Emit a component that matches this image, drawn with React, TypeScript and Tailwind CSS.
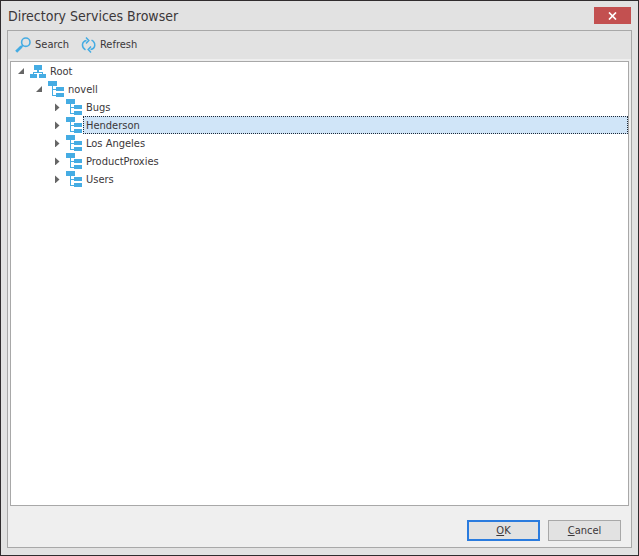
import { useState } from 'react';

interface TreeNode {
  id: string;
  label: string;
  level: number;
  expanded: boolean;
}

const nodes: TreeNode[] = [
  { id: 'root', label: 'Root', level: 0, expanded: true },
  { id: 'novell', label: 'novell', level: 1, expanded: true },
  { id: 'bugs', label: 'Bugs', level: 2, expanded: false },
  { id: 'henderson', label: 'Henderson', level: 2, expanded: false },
  { id: 'los-angeles', label: 'Los Angeles', level: 2, expanded: false },
  { id: 'product-proxies', label: 'ProductProxies', level: 2, expanded: false },
  { id: 'users', label: 'Users', level: 2, expanded: false },
];

const indents = ['pl-1', 'pl-[22px]', 'pl-10'];

function SearchIcon() {
  return (
    <svg className="w-4 h-4" viewBox="0 0 16 16" fill="none" stroke="#45ace3">
      <circle cx="10.8" cy="5.2" r="4.2" strokeWidth="1.6" />
      <path d="M8 8.200L6 10.200" strokeWidth="1.800" />
      <path d="M6.500 9.500L1.200 14.800" strokeWidth="2.800" />
    </svg>
  );
}

function RefreshIcon() {
  return (
    <svg className="w-4 h-4" viewBox="0 0 16 16" fill="none" stroke="#45ace3" strokeWidth="1.5">
      <path d="M4.500 12.800C.300 10.500 .300 4.500 5.500 3.500M10.500 3.200C15 5.500 15 11.500 9.500 12.500" />
      <path d="M5 .600L7.800 3.500L5 6.400M10 9.600L7.200 12.500L10 15.400" />
    </svg>
  );
}

function RootIcon() {
  return (
    <svg className="w-4 h-4" viewBox="0 0 16 16" fill="#45ace3" shapeRendering="crispEdges">
      <path d="M4 2h8v5H4zM7 7h2v2h4v2h-1v-1H4v1H3V9h4zM0 11h7v4H0zM9 11h7v4H9z" />
    </svg>
  );
}

function BranchIcon() {
  return (
    <svg className="w-4 h-4" viewBox="0 0 16 16" fill="#45ace3" shapeRendering="crispEdges">
      <path d="M0 0h9v5H0zM4 5h1v9h3v1H4zM5 8h3v1H5zM8 6h8v4H8zM8 12h8v4H8z" />
    </svg>
  );
}

function Arrow({ expanded }: { expanded: boolean }) {
  return (
    <svg className="w-2 h-2" viewBox="0 0 8 8" fill="#666">
      {expanded ? <path d="M7 1v6H1z" /> : <path d="M2 0.500l4.500 4-4.500 4z" />}
    </svg>
  );
}

export default function App() {
  const [selected, setSelected] = useState('henderson');

  return (
    <div className="min-h-screen flex flex-col border border-[#302c2e] bg-[#e2e2e2] px-[6px] pb-[7px] text-[11px] leading-[18px] text-[#3b3739] font-['DejaVu_Sans_Condensed','Noto_Sans',sans-serif]">
      <header className="h-[29px] flex items-center justify-between px-px">
        <h1 className="text-[14px] leading-5">Directory Services Browser</h1>
        <button
          type="button"
          aria-label="Close"
          className="w-[37px] h-[17px] flex items-center justify-center bg-[#c35050] text-white"
        >
          <svg className="w-[9px] h-2" viewBox="0 0 9 8" stroke="currentColor" strokeWidth="1.7">
            <path d="M1 .500l7 7M8 .500l-7 7" />
          </svg>
        </button>
      </header>

      <main className="flex-1 flex flex-col border border-[#a8a8a8] bg-[#efefef]">
        <div className="h-7 flex items-center gap-3 px-[7px] bg-[#e2e2e2]">
          <button type="button" className="flex items-center gap-1">
            <SearchIcon />
            Search
          </button>
          <button type="button" className="flex items-center gap-[3px]">
            <RefreshIcon />
            Refresh
          </button>
        </div>

        <div role="tree" aria-label="Directory" className="flex-1 mt-[2px] mx-[2px] border border-[#a8a8a8] bg-white">
          {nodes.map((node) => (
            <div
              key={node.id}
              role="treeitem"
              aria-level={node.level + 1}
              aria-expanded={node.expanded}
              aria-selected={selected === node.id}
              onClick={() => setSelected(node.id)}
              className={`h-[18px] flex items-center ${indents[node.level]}`}
            >
              <span className="w-[15px] h-[18px] flex items-center pl-[2px]">
                <Arrow expanded={node.expanded} />
              </span>
              {node.level === 0 ? <RootIcon /> : <BranchIcon />}
              <span
                className={`flex-1 h-[18px] ml-px pl-[2px] border border-dotted ${
                  selected === node.id ? 'border-[#1f2937] bg-[#d0e5f8]' : 'border-transparent'
                }`}
              >
                {node.label}
              </span>
            </div>
          ))}
        </div>

        <footer className="flex justify-end gap-2 px-[10px] pt-[14px] pb-[6px]">
          <button type="button" className="w-[73px] h-[21px] flex items-center justify-center border-2 border-[#2a7bde] bg-[#e2e2e2]">
            <span className="underline">O</span>K
          </button>
          <button type="button" className="w-[73px] h-[21px] flex items-center justify-center border border-[#a8a8a8] bg-[#e2e2e2]">
            <span className="underline">C</span>ancel
          </button>
        </footer>
      </main>
    </div>
  );
}
